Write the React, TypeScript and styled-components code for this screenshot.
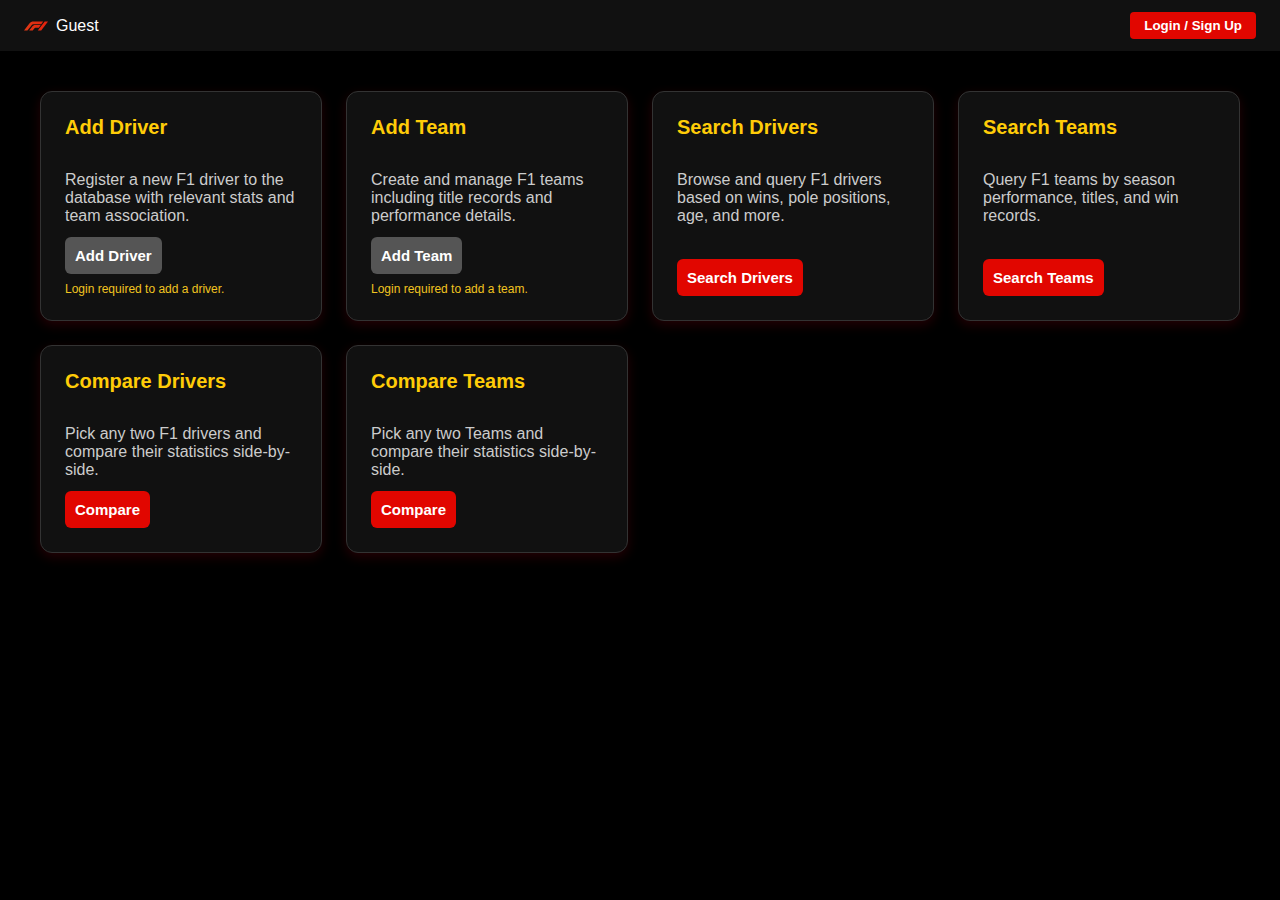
import React from "react";
import styled, { createGlobalStyle } from "styled-components";

const GlobalStyle = createGlobalStyle`
  *, *::before, *::after { box-sizing: border-box; }
  body {
    margin: 0;
    background: #000;
    color: #fff;
    font-family: Arial, "Liberation Sans", sans-serif;
    font-size: 16px;
    line-height: 18px;
  }
`;

const Navbar = styled.header`
  display: flex;
  align-items: center;
  justify-content: space-between;
  padding: 12px 24px;
  background: #111;
`;

const Brand = styled.div`
  display: flex;
  align-items: center;
  gap: 8px;
`;

const Logo = styled.svg`
  width: 24px;
  height: 10px;
`;

const Button = styled.button`
  border: 0;
  background: #e10600;
  color: #fff;
  font-family: Arial, "Liberation Sans", sans-serif;
  font-weight: bold;
  cursor: pointer;

  &:disabled {
    background: #555;
    cursor: not-allowed;
  }
`;

const LoginButton = styled(Button)`
  padding: 6px 14px;
  border-radius: 4px;
`;

const ActionButton = styled(Button)`
  padding: 10px;
  border-radius: 6px;
  font-size: 15px;
  line-height: 17px;
`;

const Grid = styled.main`
  display: grid;
  grid-template-columns: repeat(auto-fit, minmax(260px, 1fr));
  gap: 24px;
  padding: 40px;
`;

const Card = styled.section`
  display: flex;
  flex-direction: column;
  justify-content: space-between;
  gap: 12px;
  padding: 24px;
  border: 1px solid #333;
  border-radius: 12px;
  background: #111;
  box-shadow: 0 4px 12px rgba(255, 0, 30, 0.14);
`;

const Title = styled.h2`
  margin: 0 0 32px;
  color: #ffcc08;
  font-size: 20px;
  line-height: 23px;
`;

const Description = styled.p`
  margin: 0;
  color: #ccc;
`;

const Note = styled.p`
  margin: 8px 0 0;
  color: #f1c420;
  font-size: 12px;
  line-height: 14px;
`;

interface CardData {
  title: string;
  text: string;
  action: string;
  note?: string;
}

const cards: CardData[] = [
  {
    title: "Add Driver",
    text: "Register a new F1 driver to the database with relevant stats and team association.",
    action: "Add Driver",
    note: "Login required to add a driver.",
  },
  {
    title: "Add Team",
    text: "Create and manage F1 teams including title records and performance details.",
    action: "Add Team",
    note: "Login required to add a team.",
  },
  {
    title: "Search Drivers",
    text: "Browse and query F1 drivers based on wins, pole positions, age, and more.",
    action: "Search Drivers",
  },
  {
    title: "Search Teams",
    text: "Query F1 teams by season performance, titles, and win records.",
    action: "Search Teams",
  },
  {
    title: "Compare Drivers",
    text: "Pick any two F1 drivers and compare their statistics side-by-side.",
    action: "Compare",
  },
  {
    title: "Compare Teams",
    text: "Pick any two Teams and compare their statistics side-by-side.",
    action: "Compare",
  },
];

export default function App() {
  return (
    <>
      <GlobalStyle />
      <Navbar>
        <Brand>
          <Logo viewBox="0 0 24 10" aria-hidden="true">
            <defs>
              <linearGradient id="logo-red" x1="0" y1="0" x2="24" y2="0" gradientUnits="userSpaceOnUse">
                <stop offset="0" stopColor="#dd3a16" />
                <stop offset="1" stopColor="#e5200c" />
              </linearGradient>
            </defs>
            <g fill="url(#logo-red)">
              <path d="M0 9.6L5 3C6.5.9 7.6.5 10 .5h9.2l-2 2.8h-6.7c-1.7 0-2.4.4-3.4 1.6L3.4 9.6z" />
              <path d="M5.2 9.6l2.7-3.6C9 4.5 9.8 4.1 11.4 4.1h5.3L14.8 6.8h-2.9c-.9 0-1.3.2-1.8.9L8.7 9.6z" />
              <path d="M13.8 9.6L20.7.5H24L17.2 9.6z" />
            </g>
          </Logo>
          <span>Guest</span>
        </Brand>
        <LoginButton type="button">Login / Sign Up</LoginButton>
      </Navbar>
      <Grid>
        {cards.map((card) => (
          <Card key={card.title}>
            <div>
              <Title>{card.title}</Title>
              <Description>{card.text}</Description>
            </div>
            <div>
              <ActionButton type="button" disabled={Boolean(card.note)}>
                {card.action}
              </ActionButton>
              {card.note && <Note>{card.note}</Note>}
            </div>
          </Card>
        ))}
      </Grid>
    </>
  );
}
